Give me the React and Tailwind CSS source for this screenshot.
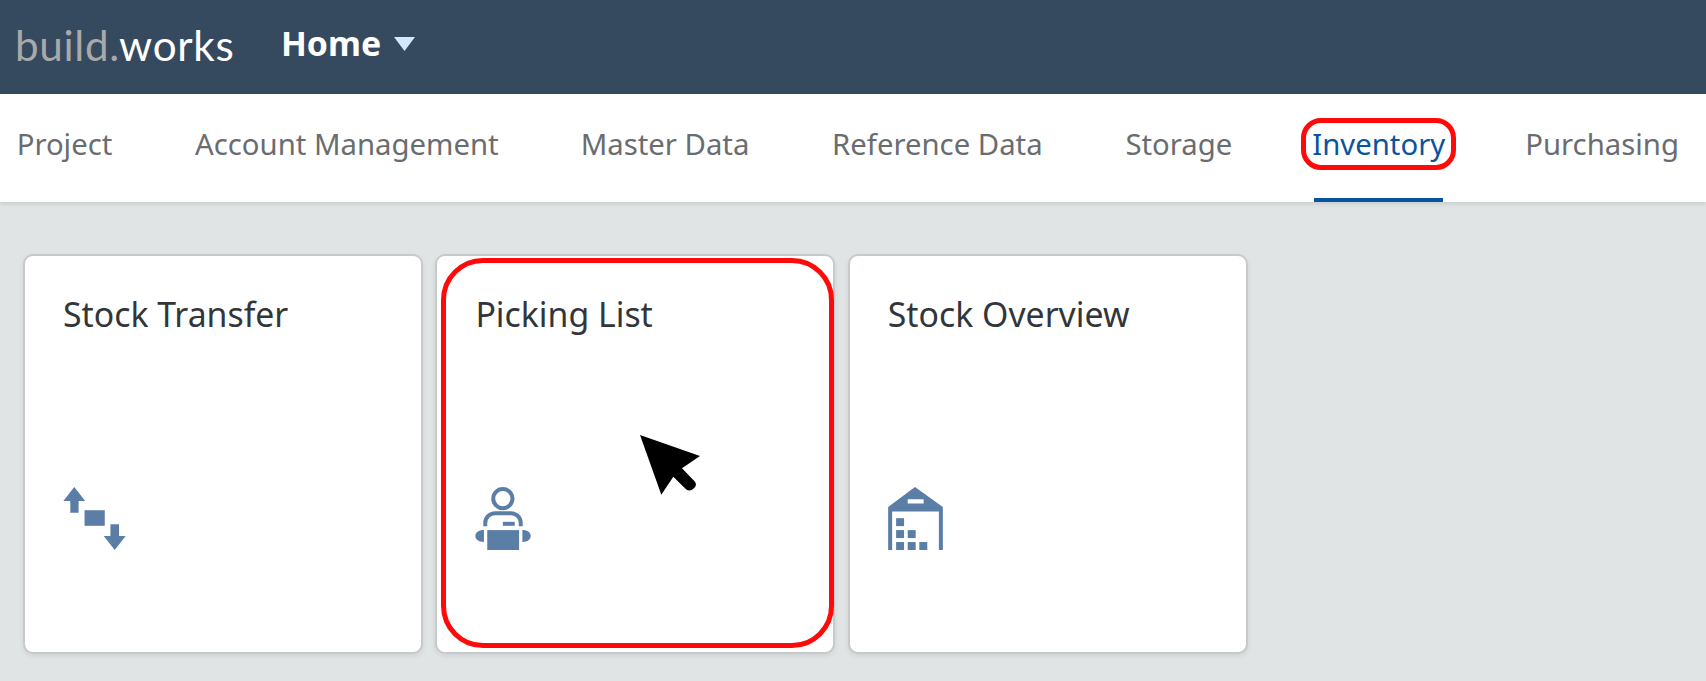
const tabs = [
  { label: 'Project', width: 'w-[97px]' },
  { label: 'Account Management', width: 'w-auto' },
  { label: 'Master Data', width: 'w-auto' },
  { label: 'Reference Data', width: 'w-[212px]' },
  { label: 'Storage', width: 'w-auto' },
  { label: 'Inventory', width: 'w-[129px]' },
  { label: 'Purchasing', width: 'w-auto' }
];

function TransferIcon() {
  return (
    <svg viewBox="70 50 188 190" width="63" height="63" className="fill-[#5b7ea6]">
      <path d="M103 50 L136 92 H116 V128 H91 V92 H70 Z" />
      <rect x="134" y="120" width="61" height="47" />
      <path d="M212 162 H238 V198 H258 L225 240 L192 198 H212 Z" />
    </svg>
  );
}

function PickingIcon() {
  return (
    <svg viewBox="45 50 167 190" width="56" height="63" className="fill-[#5b7ea6]">
      <circle cx="128" cy="85" r="29" fill="none" stroke="#5b7ea6" strokeWidth="12" />
      <path d="M75 168 V160 A30 30 0 0 1 105 129 H152 A30 30 0 0 1 182 160 V168" fill="none" stroke="#5b7ea6" strokeWidth="12" />
      <rect x="128" y="155" width="36" height="12" />
      <rect x="81" y="180" width="96" height="60" />
      <path d="M71 180 V216 C55 216 45 208 45 198 C45 188 55 180 71 180 Z" />
      <path d="M187 180 V216 C203 216 212 208 212 198 C212 188 203 180 187 180 Z" />
    </svg>
  );
}

function WarehouseIcon() {
  return (
    <svg viewBox="52 50 165 190" width="55" height="63" className="fill-[#5b7ea6]">
      <path fillRule="evenodd" d="M133 50 L217 110 V240 H205 V124 H64 V240 H52 V110 Z M111 87 V100 H159 V87 Z" />
      <rect x="76" y="144" width="24" height="24" />
      <rect x="76" y="180" width="24" height="24" />
      <rect x="111" y="180" width="24" height="24" />
      <rect x="76" y="216" width="24" height="24" />
      <rect x="111" y="216" width="24" height="24" />
      <rect x="146" y="216" width="24" height="24" />
    </svg>
  );
}

function Tile({ title, icon }) {
  return (
    <div className="flex h-[400px] w-[400px] flex-col justify-between rounded-[10px] border-2 border-[#c6cacb] bg-white pb-[102px] pl-[38px] pt-[36px] shadow-[0_2px_5px_rgba(0,0,0,0.08)]">
      <p className="text-[33.8px] leading-[44px] text-[#32363a]">{title}</p>
      {icon}
    </div>
  );
}

export default function App() {
  return (
    <div className="relative h-[681px] overflow-hidden bg-[#e0e4e4] font-['Noto_Sans',sans-serif]">
      <header className="flex h-[94px] items-center bg-[#354a5f] pl-[15px]">
        <span className="w-[266px] pb-[4px] text-[42.2px] leading-none tracking-[0.7px] text-white font-['Lato',sans-serif]">
          <span className="text-[#a9a9a9]">build.</span>works
        </span>
        <div className="flex items-center pb-[6px]">
          <span className="text-[33.8px] font-bold leading-none text-white">Home</span>
          <svg viewBox="0 0 21 14" width="23" height="14" className="ml-[12px] fill-[#d1e8ff]">
            <path d="M0 0 H21 L10.5 14 Z" />
          </svg>
        </div>
      </header>

      <nav className="flex h-[108px] items-stretch gap-[82px] bg-white pl-[16px] shadow-[0_2px_4px_rgba(0,0,0,0.1)]">
        {tabs.map((tab) => (
          <div
            key={tab.label}
            className={`flex items-center justify-center whitespace-nowrap border-b-4 pb-[2px] text-[29.3px] leading-none ${tab.width} ${
              tab.label === 'Inventory' ? 'border-[#0854a0] text-[#0854a0]' : 'border-transparent text-[#6a6d70]'
            }`}
          >
            {tab.label}
          </div>
        ))}
      </nav>

      <main className="flex gap-[12.4px] pl-[23px] pt-[52px]">
        <Tile title="Stock Transfer" icon={<TransferIcon />} />
        <Tile title="Picking List" icon={<PickingIcon />} />
        <Tile title="Stock Overview" icon={<WarehouseIcon />} />
      </main>

      {/* red annotations and pointer lying over the page */}
      <div className="absolute left-[1301px] top-[118px] h-[52px] w-[155px] rounded-[20px] border-[5px] border-[#ff0a0a]" />
      <div className="absolute left-[441px] top-[258px] h-[390px] w-[393px] rounded-[42px] border-[5.5px] border-[#ff0a0a]" />
      <svg viewBox="60 45 180 180" width="60" height="60" className="absolute left-[640px] top-[435px]">
        <path d="M60 45 L240 108 L186 145 L225 185 Q232 195 222 205 Q210 217 198 208 L160 170 L124 224 Z" fill="#000" />
      </svg>
    </div>
  );
}
